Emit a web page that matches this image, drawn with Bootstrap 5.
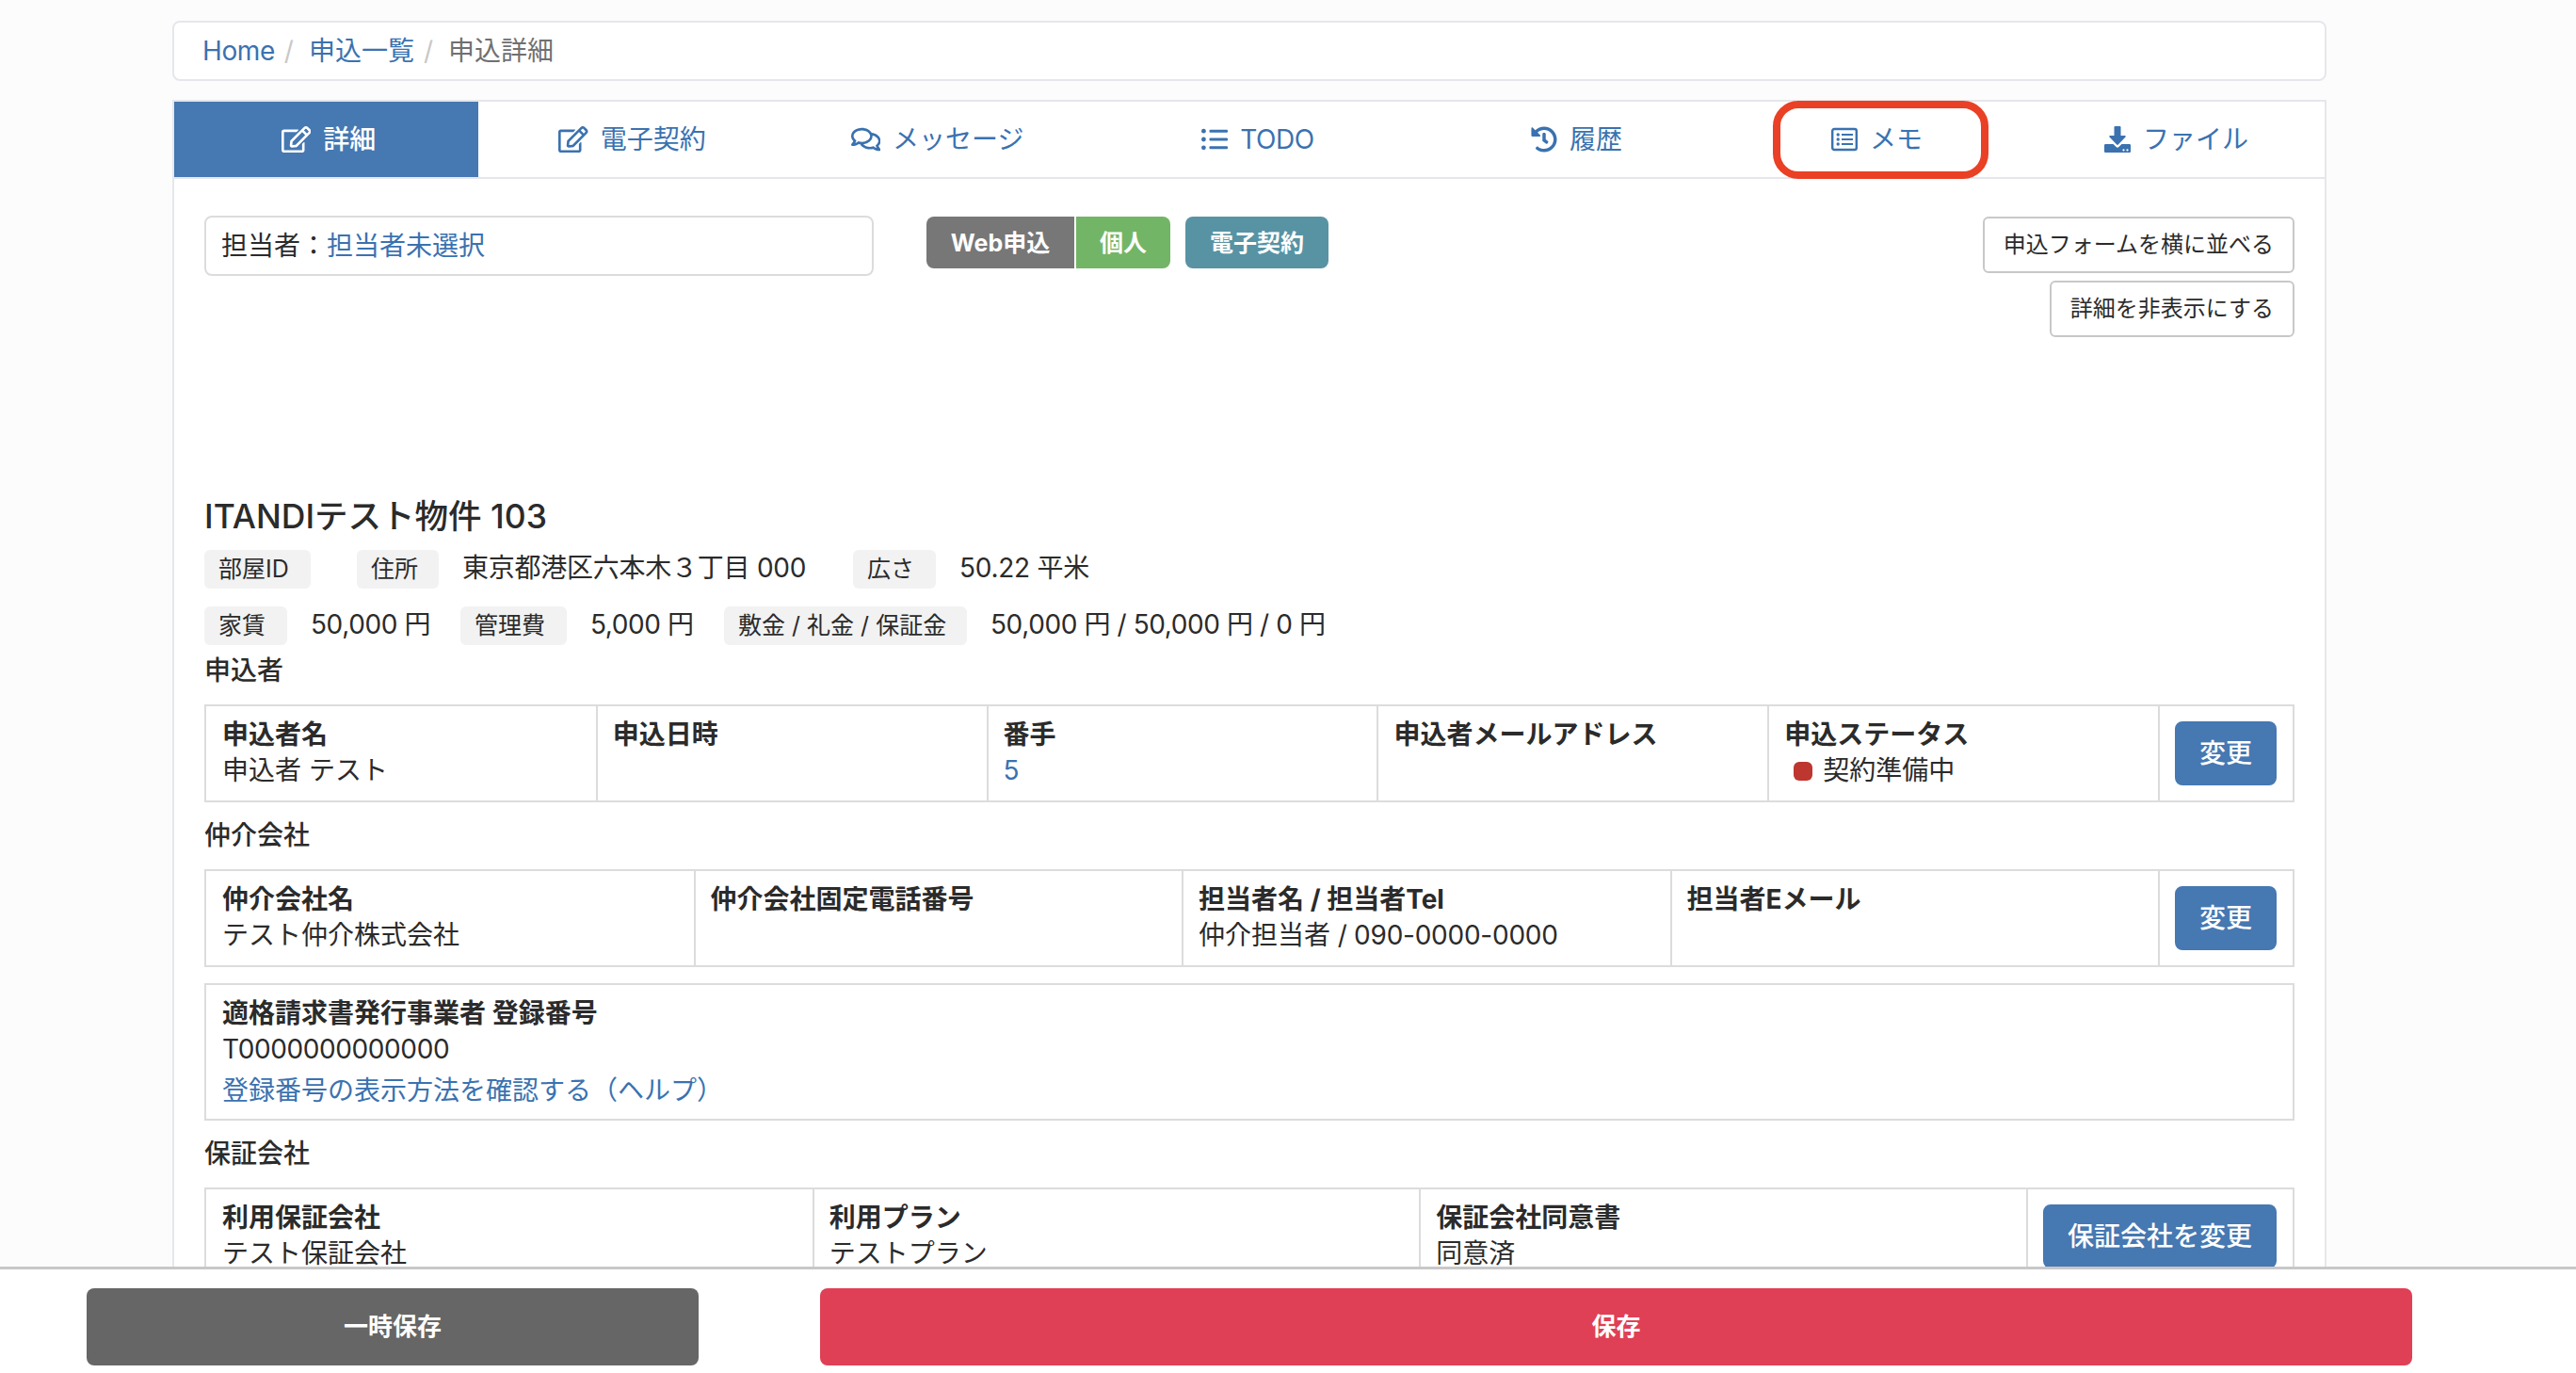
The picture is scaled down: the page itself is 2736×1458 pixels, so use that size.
<!DOCTYPE html>
<html lang="ja">
<head>
<meta charset="utf-8">
<title>申込詳細</title>
<link href="https://cdn.jsdelivr.net/npm/bootstrap@5.3.0/dist/css/bootstrap.min.css" rel="stylesheet">
<style>
:root { --line: #dcdcdc; --edge: #e6e7ec; --brand: #4678b2; --link: #3a72b0; }
body { font: 400 28px/38px Inter, "Noto Sans CJK JP", sans-serif; color: #2b2b2b; background: #fcfcfc; height: 1458px; overflow: hidden; }
a { color: var(--link); text-decoration: none; }
.page { width: 2288px; margin-left: 183px; padding-top: 22px; }
.crumbs { height: 64px; border: 2px solid var(--edge); border-radius: 8px; padding: 0 30px; margin-bottom: 20px; }
.crumbs .breadcrumb { --bs-breadcrumb-divider-color: #c8c8c8; --bs-breadcrumb-item-active-color: #707070; --bs-breadcrumb-item-padding-x: 10px; }
.crumbs .breadcrumb-item + .breadcrumb-item::before { padding-right: 16px; }
.panel { border: 2px solid var(--edge); height: 1400px; }
.tabs { height: 82px; border-bottom: 2px solid var(--edge); display: grid; grid-template-columns: 323px 326px 322px 359px 318px 320px 1fr; }
.tabs .nav-link { padding: 0 0 0 1px; gap: 13px; color: var(--link); border-radius: 0; position: relative; height: 80px; }
.tabs .nav-link.active { background: var(--brand); color: #fff; font-weight: 500; padding-left: 5px; }
.tabs svg { height: 28px; fill: currentColor; flex: none; }
.marker { position: absolute; left: 50%; top: 50%; width: 229px; height: 83px; margin: -41px 0 0 -110px; border: 8px solid #ea4025; border-radius: 27px; }
.body-pad { padding: 39px 32px 0; }
.topbar { height: 298px; }
.owner { width: 711px; height: 64px; border: 2px solid var(--line); border-radius: 8px; padding: 0 16px; margin-right: 56px; }
.tag { height: 55px; padding: 0 26px; font-size: 25px; font-weight: 700; color: #fff; border-radius: 8px; margin-top: 1px; }
.tag-web { background: #777; border-radius: 8px 0 0 8px; margin-right: 2px; width: 157px; padding: 0; }
.tag-kind { background: #73b566; border-radius: 0 8px 8px 0; margin-right: 16px; padding: 0 25px; }
.tag-sign { background: #5893a4; }
.side-actions { gap: 8px; margin-top: 1px; }
.btn-plain { --bs-btn-padding-x: 20px; --bs-btn-padding-y: 10px; --bs-btn-font-size: 24px; --bs-btn-line-height: 36px; --bs-btn-border-width: 2px; --bs-btn-border-color: #c8c8c8; --bs-btn-border-radius: 6px; --bs-btn-bg: #fff; --bs-btn-color: #2b2b2b; }
.bldg { font-size: 35.5px; line-height: 44px; font-weight: 500; margin: 0 0 13px; }
.facts { height: 41px; margin-bottom: 19px; }
.lbl { background: #f2f2f2; border-radius: 6px; height: 41px; line-height: 40px; font-size: 25px; padding-left: 15px; margin-right: 25px; white-space: nowrap; }
.fact { white-space: nowrap; line-height: 39px; }
.snug { letter-spacing: -.4px; }
.num { letter-spacing: -.25px; }
.sec { font-size: 28px; font-weight: 500; line-height: 38px; margin: 16px 0 17px; }
.sec-first { margin-top: 8px; }
.grid-box { display: flex; border: 2px solid var(--line); width: 2220px; height: 104px; }
.grid-box > div { padding: 11px 16px 0; flex: 1 1 0; border-left: 2px solid var(--line); white-space: nowrap; }
.grid-box > div:first-child { border-left: 0; padding-left: 17px; }
.grid-box > .act { flex: none; width: 143px; padding-top: 16px; }
.grid-box > .act.wide { width: 283px; }
.grid-box.reg { height: 146px; margin-top: 17px; }
.hd { font-weight: 700; }
.btn-brand { --bs-btn-padding-x: 24px; --bs-btn-padding-y: 13px; --bs-btn-font-size: 28px; --bs-btn-line-height: 38px; --bs-btn-border-width: 2px; --bs-btn-border-radius: 8px; --bs-btn-bg: var(--brand); --bs-btn-border-color: var(--brand); --bs-btn-color: #fff; --bs-btn-font-weight: 500; }
.dot { display: inline-block; width: 20px; height: 20px; border-radius: 6px; background: #bd362f; margin: 0 11px 0 10px; vertical-align: -1px; }
.savebar { height: 113px; border-top: 3px solid #c8c8c8; background: #fff; padding: 20px 0 0 92px; }
.savebar .btn { height: 82px; border: 0; border-radius: 8px; color: #fff; font-size: 26px; font-weight: 700; padding: 0 0 2px; }
.save-tmp { width: 650px; background: #666; margin-right: 129px; }
.save-main { width: 1691px; background: #df4056; }
</style>
</head>
<body>
<div class="page">
  <nav class="crumbs bg-white d-flex align-items-center">
    <ol class="breadcrumb mb-0">
      <li class="breadcrumb-item"><a class="snug" href="#">Home</a></li>
      <li class="breadcrumb-item"><a href="#">申込一覧</a></li>
      <li class="breadcrumb-item active">申込詳細</li>
    </ol>
  </nav>
  <main class="panel bg-white">
    <nav class="nav tabs">
      <a class="nav-link active d-flex align-items-center justify-content-center" href="#"><svg viewBox="0 0 576 512"><path id="edit" d="M402.3 344.9l32-32c5-5 13.7-1.5 13.7 5.7V464c0 26.5-21.5 48-48 48H48c-26.5 0-48-21.5-48-48V112c0-26.5 21.5-48 48-48h273.5c7.1 0 10.7 8.6 5.7 13.7l-32 32c-1.5 1.5-3.5 2.3-5.7 2.3H48v352h352V350.5c0-2.1.8-4.1 2.3-5.6zm156.6-201.8L296.3 405.7l-90.4 10c-26.2 2.9-48.5-19.2-45.6-45.6l10-90.4L432.9 17.1c22.9-22.9 59.9-22.9 82.7 0l43.2 43.2c22.9 22.9 22.9 60 .1 82.8zM460.1 174L402 115.9 216.2 301.8l-7.3 65.3 65.3-7.3L460.1 174zm64.8-79.7l-43.2-43.2c-4.1-4.1-10.8-4.1-14.8 0L436 82l58.1 58.1 30.9-30.9c4-4.2 4-10.8-.1-14.9z"/></svg>詳細</a>
      <a class="nav-link d-flex align-items-center justify-content-center" href="#"><svg viewBox="0 0 576 512"><use href="#edit"/></svg>電子契約</a>
      <a class="nav-link d-flex align-items-center justify-content-center" href="#"><svg viewBox="0 0 576 512"><path d="M532 386.2c27.5-27.1 44-61.1 44-98.2 0-80-76.5-146.1-176.2-157.9C368.3 72.5 294.3 32 208 32 93.1 32 0 103.6 0 192c0 37 16.5 71 44 98.2-15.3 30.7-37.3 54.5-37.7 54.9-6.3 6.7-8.1 16.5-4.4 25 3.6 8.5 12 14 21.2 14 53.5 0 96.7-20.2 125.2-38.8 9.2 2.1 18.7 3.7 28.4 4.9C208.1 407.6 281.8 448 368 448c20.8 0 40.8-2.4 59.8-6.8C456.3 459.7 499.4 480 553 480c9.2 0 17.5-5.5 21.2-14 3.6-8.5 1.9-18.3-4.4-25-.4-.3-22.5-24.1-37.8-54.8zm-392.8-92.3L122.1 305c-14.1 9.1-28.5 16.3-43.1 21.4 2.7-4.7 5.4-9.7 8-14.8l15.5-31.1L77.7 256C64.2 242.6 48 220.7 48 192c0-60.7 73.3-112 160-112s160 51.3 160 112-73.3 112-160 112c-16.5 0-33-1.9-49-5.6l-19.8-4.5zM498.3 352l-24.7 24.4 15.5 31.1c2.6 5.1 5.3 10.1 8 14.8-14.6-5.1-29-12.3-43.1-21.4l-17.1-11.1-19.9 4.6c-16 3.7-32.5 5.6-49 5.6-54 0-102.2-20.1-131.3-49.7C338 339.5 416 272.9 416 192c0-3.4-.4-6.7-.7-10C479.7 196.5 528 238.8 528 288c0 28.7-16.2 50.6-29.7 64z"/></svg>メッセージ</a>
      <a class="nav-link d-flex align-items-center justify-content-center" href="#"><svg viewBox="0 0 28 28"><circle cx="2.4" cy="5.2" r="2.4"/><circle cx="2.4" cy="14" r="2.4"/><circle cx="2.4" cy="22.8" r="2.4"/><rect x="8.5" y="3.7" width="19.5" height="3" rx="1"/><rect x="8.5" y="12.5" width="19.5" height="3" rx="1"/><rect x="8.5" y="21.3" width="19.5" height="3" rx="1"/></svg><span class="snug">TODO</span></a>
      <a class="nav-link d-flex align-items-center justify-content-center" href="#"><svg viewBox="0 0 512 512"><path d="M504 255.531c.253 136.64-111.18 248.372-247.82 248.468-59.015.042-113.223-20.53-155.822-54.911-11.077-8.94-11.905-25.541-1.839-35.607l11.267-11.267c8.609-8.609 22.353-9.551 31.891-1.984C173.062 425.135 212.781 440 256 440c101.705 0 184-82.311 184-184 0-101.705-82.311-184-184-184-48.814 0-93.149 18.969-126.068 49.932l50.754 50.754c10.08 10.08 2.941 27.314-11.313 27.314H24c-8.837 0-16-7.163-16-16V38.627c0-14.254 17.234-21.393 27.314-11.314l49.372 49.372C129.209 34.136 189.552 8 256 8c136.81 0 247.747 110.78 248 247.531zm-180.912 78.784l9.823-12.63c8.138-10.463 6.253-25.542-4.21-33.679L288 256.349V152c0-13.255-10.745-24-24-24h-16c-13.255 0-24 10.745-24 24v135.651l65.409 50.874c10.463 8.137 25.541 6.253 33.679-4.21z"/></svg>履歴</a>
      <a class="nav-link d-flex align-items-center justify-content-center" href="#"><svg viewBox="0 0 28 28"><rect x="1.2" y="3" width="25.6" height="22" rx="2" fill="none" stroke="currentColor" stroke-width="2.4"/><circle cx="7.2" cy="9" r="1.7"/><circle cx="7.2" cy="14" r="1.7"/><circle cx="7.2" cy="19" r="1.7"/><path d="M11 8h12v2H11zM11 13h12v2H11zM11 18h12v2H11z"/></svg>メモ<span class="marker"></span></a>
      <a class="nav-link d-flex align-items-center justify-content-center" href="#"><svg viewBox="0 0 28 28"><path d="M11.5 0h5a1 1 0 0 1 1 1v9h4.3c.9 0 1.3 1 .7 1.6l-7.7 7.9a1.1 1.1 0 0 1-1.6 0L5.5 11.6C4.9 11 5.3 10 6.2 10h4.3V1a1 1 0 0 1 1-1z"/><path fill-rule="evenodd" d="M1.3 19h8.2l2.8 2.8a2.4 2.4 0 0 0 3.4 0L18.5 19h8.2c.7 0 1.3.6 1.3 1.3v6.4c0 .7-.6 1.3-1.3 1.3H1.3C.6 28 0 27.4 0 26.7v-6.4C0 19.6.6 19 1.3 19zM20.5 24.3a1.1 1.1 0 1 0 0 2.2 1.1 1.1 0 0 0 0-2.2zm4 0a1.1 1.1 0 1 0 0 2.2 1.1 1.1 0 0 0 0-2.2z"/></svg>ファイル</a>
    </nav>
    <div class="body-pad">
      <div class="topbar d-flex align-items-start">
        <div class="owner d-flex align-items-center">担当者：<a href="#">担当者未選択</a></div>
        <span class="tag tag-web d-flex align-items-center justify-content-center">Web申込</span>
        <span class="tag tag-kind d-flex align-items-center">個人</span>
        <span class="tag tag-sign d-flex align-items-center">電子契約</span>
        <div class="side-actions ms-auto d-flex flex-column align-items-end">
          <button class="btn btn-plain">申込フォームを横に並べる</button>
          <button class="btn btn-plain">詳細を非表示にする</button>
        </div>
      </div>
      <h1 class="bldg">ITANDIテスト物件 103</h1>
      <div class="facts d-flex">
        <span class="lbl" style="width:113px;margin-right:49px">部屋ID</span>
        <span class="lbl" style="width:87px">住所</span><span class="fact num" style="width:415px">東京都港区六本木３丁目 000</span>
        <span class="lbl" style="width:88px">広さ</span><span class="fact num">50.22 平米</span>
      </div>
      <div class="facts d-flex mb-0">
        <span class="lbl" style="width:88px">家賃</span><span class="fact snug" style="width:159px">50,000 円</span>
        <span class="lbl" style="width:113px">管理費</span><span class="fact snug" style="width:142px">5,000 円</span>
        <span class="lbl" style="width:258px">敷金 / 礼金 / 保証金</span><span class="fact snug">50,000 円 / 50,000 円 / 0 円</span>
      </div>
      <h2 class="sec sec-first">申込者</h2>
      <div class="grid-box">
        <div><div class="hd">申込者名</div>申込者 テスト</div>
        <div><div class="hd">申込日時</div></div>
        <div><div class="hd">番手</div><a href="#">5</a></div>
        <div><div class="hd">申込者メールアドレス</div></div>
        <div><div class="hd">申込ステータス</div><span class="dot"></span>契約準備中</div>
        <div class="act"><button class="btn btn-brand">変更</button></div>
      </div>
      <h2 class="sec">仲介会社</h2>
      <div class="grid-box">
        <div><div class="hd">仲介会社名</div>テスト仲介株式会社</div>
        <div><div class="hd">仲介会社固定電話番号</div></div>
        <div><div class="hd">担当者名 / 担当者Tel</div>仲介担当者<span class="num"> / 090-0000-0000</span></div>
        <div><div class="hd">担当者Eメール</div></div>
        <div class="act"><button class="btn btn-brand">変更</button></div>
      </div>
      <div class="grid-box reg">
        <div><div class="hd">適格請求書発行事業者 登録番号</div><div class="snug" style="margin-bottom:6px">T0000000000000</div><a href="#">登録番号の表示方法を確認する（ヘルプ）</a></div>
      </div>
      <h2 class="sec">保証会社</h2>
      <div class="grid-box">
        <div><div class="hd">利用保証会社</div>テスト保証会社</div>
        <div><div class="hd">利用プラン</div>テストプラン</div>
        <div><div class="hd">保証会社同意書</div>同意済</div>
        <div class="act wide"><button class="btn btn-brand">保証会社を変更</button></div>
      </div>
    </div>
  </main>
</div>
<footer class="savebar fixed-bottom d-flex">
  <button class="btn save-tmp">一時保存</button>
  <button class="btn save-main">保存</button>
</footer>
<script src="https://cdn.jsdelivr.net/npm/bootstrap@5.3.0/dist/js/bootstrap.bundle.min.js"></script>
</body>
</html>
